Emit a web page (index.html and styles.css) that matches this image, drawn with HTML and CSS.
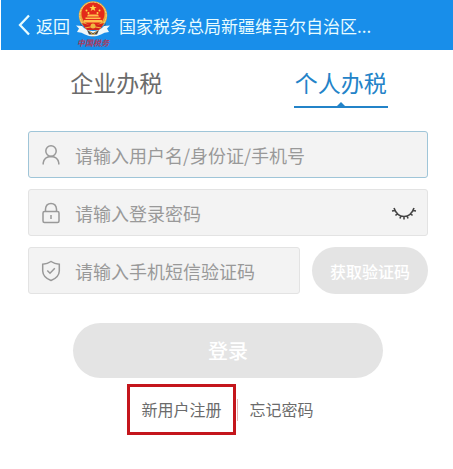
FILE: index.html
```html
<!DOCTYPE html>
<html lang="zh-CN">
<head>
<meta charset="utf-8">
<meta name="viewport" content="width=device-width, initial-scale=1">
<title>个人办税登录</title>
<link rel="stylesheet" href="styles.css">
</head>
<body>
<header class="topbar">
  <a class="back" href="#">
    <svg width="12" height="22" viewBox="0 0 12 22" aria-hidden="true"><path d="M11 1.500 2 11l9 9.500" fill="none" stroke="#e8fcff" stroke-width="2.300"/></svg>
    <span>返回</span>
  </a>
  <svg class="emblem" width="38" height="50" viewBox="0 0 38 50" aria-hidden="true">
    <path d="M6 22Q10 34 19 35 28 34 32 22L30 31 19 37 8 31Z" fill="#4a4038"/>
    <circle cx="19" cy="15.500" r="14.200" fill="#e9a83a"/>
    <circle cx="19" cy="15.500" r="13.200" fill="none" stroke="#f8da86" stroke-width="1" stroke-dasharray="2 1"/>
    <circle cx="19" cy="14" r="11.500" fill="#e32a1a"/>
    <path d="m19 4.500 1 2.500h2.600l-2.100 1.600.8 2.500-2.300-1.500-2.300 1.500.8-2.500-2.100-1.600H18Z" fill="#ffd84d"/>
    <g fill="#ffd84d"><circle cx="12.500" cy="10.500" r="1"/><circle cx="14.500" cy="13" r="1"/><circle cx="23.500" cy="13" r="1"/><circle cx="25.500" cy="10.500" r="1"/></g>
    <path d="M13 16.500 14 14.500H24L25 16.500ZM11.500 17.500H26.500V19H11.500ZM10 20H28V22.500H10Z" fill="#ffc04c"/>
    <path d="M8 23Q19 27 30 23L26 30H12Z" fill="#d3241b"/>
    <circle cx="19" cy="26" r="2.500" fill="#f0b942"/>
    <path d="M11 28Q19 25 27 28" fill="none" stroke="#f0b942"/>
    <path d="M2 25.500 8 26Q12 31 19 31T30 26L36 25.500 33 28.500 35 32Q30 32 27 34.500 19 38.500 11 34.500 8 32 3 32L5 28.500Z" fill="#eef7fa"/>
    <path d="M13 30 19 33 25 30 23 34.500H15Z" fill="#4b4a49"/>
    <path d="M15 30.500 19 35 23 30.500" fill="none" stroke="#e0ad4b"/>
    <text class="emblem-name" x="19" y="46" text-anchor="middle">中国税务</text>
  </svg>
  <h1 class="title">国家税务总局新疆维吾尔自治区...</h1>
</header>

<main>
  <nav class="tabs">
    <a class="tab" href="#">企业办税</a>
    <a class="tab tab-active" href="#" aria-current="page">个人办税</a>
  </nav>

  <form class="form">
    <label class="field field-focus">
      <svg class="icon" width="20" height="22" viewBox="0 0 20 22" aria-hidden="true"><g fill="none" stroke="#999" stroke-width="1.500"><circle cx="10" cy="7" r="5.200"/><path d="M2.200 20.500V19Q3 12.800 10 12.500 17 12.800 17.800 19V20.500"/></g></svg>
      <input type="text" placeholder="请输入用户名/身份证/手机号" aria-label="用户名/身份证/手机号">
    </label>
    <label class="field">
      <svg class="icon" width="20" height="22" viewBox="0 0 20 22" aria-hidden="true"><g fill="none" stroke="#999" stroke-width="1.500"><rect x="2" y="9.500" width="16" height="11" rx="1.500"/><path d="M4.500 9.500V7Q5 1.500 10 1.500T15.500 7V9.500M10 13v4"/></g></svg>
      <input type="password" placeholder="请输入登录密码" aria-label="登录密码">
      <button class="reveal" type="button" aria-label="显示密码">
        <svg width="26" height="14" viewBox="0 0 26 14" aria-hidden="true"><path d="M3 2Q6 10.500 13 10.500T23 2M4 4.500 1 5M6.500 7.500 4.500 9.500M10 9.500 9 12.500M13 10V13.500M16 9.500 17 12.500M19.500 7.500 21.500 9.500M22 4.500 25 5" fill="none" stroke="#444" stroke-width="1.600"/></svg>
      </button>
    </label>
    <div class="code-row">
      <label class="field">
        <svg class="icon" width="20" height="22" viewBox="0 0 20 22" aria-hidden="true"><g fill="none" stroke="#999" stroke-width="1.500"><path d="M10 1.500Q13.500 4 18.300 4.200V11Q18 17.500 10 20.500 2 17.500 1.700 11V4.200Q6.500 4 10 1.500Z"/><path d="m6.300 10.500 2.700 2.700 4.800-5"/></g></svg>
        <input type="text" placeholder="请输入手机短信验证码" aria-label="手机短信验证码">
      </label>
      <button class="pill get-code" type="button">获取验证码</button>
    </div>
    <button class="pill login" type="submit">登录</button>
  </form>

  <div class="links">
    <a class="link link-marked" href="#">新用户注册</a>
    <span class="divider"></span>
    <a class="link" href="#">忘记密码</a>
  </div>
</main>
</body>
</html>
```
FILE: styles.css
```css
* { box-sizing: border-box; }

body {
  margin: 0;
  background: #fff;
  color: #6b6b6b;
  font-family: "Noto Sans CJK SC", sans-serif;
  font-size: 16px;
}

a { color: inherit; text-decoration: none; }

button { border: 0; padding: 0; font-family: inherit; }

.topbar {
  display: flex;
  align-items: center;
  height: 50px;
  margin-left: 1px;
  padding-left: 17px;
  background: #188eea;
  color: #e8fcff;
  font-size: 17px;
}

.back { display: flex; align-items: center; gap: 6px; }

.emblem { margin: 0 7px 0 4px; flex: none; }

.emblem-name {
  fill: #a83a5c;
  font-size: 8px;
  font-style: italic;
  font-weight: 700;
}

.title {
  margin: 0;
  font-size: 17px;
  font-weight: 400;
  white-space: nowrap;
}

.tabs {
  display: flex;
  justify-content: space-around;
  padding: 15px 0 0 4px;
}

.tab {
  position: relative;
  height: 43px;
  padding: 0 1px;
  font-size: 23px;
  line-height: 34px;
}

.tab-active {
  border-bottom: 2px solid #2383c8;
  color: #2383c8;
}

.tab-active::after {
  content: "";
  position: absolute;
  bottom: 0;
  left: 50%;
  margin-left: -4px;
  border: 4px solid transparent;
  border-top: 0;
  border-bottom-color: #2383c8;
}

.form {
  display: flex;
  flex-direction: column;
  gap: 11px;
  padding: 23px 25px 0 28px;
}

.field {
  display: flex;
  align-items: center;
  flex: 1;
  height: 47px;
  min-width: 0;
  padding: 0 10px 0 12px;
  border: 1px solid #e3e3e3;
  border-radius: 3px;
  background: #f3f3f3;
}

.form > .field { flex: none; }

.field-focus { border-color: #9fc5d8; }

.icon { flex: none; }

.field input {
  flex: 1;
  min-width: 0;
  margin-left: 14px;
  padding: 0;
  border: 0;
  outline: 0;
  background: transparent;
  color: #666;
  font-family: inherit;
  font-size: 18px;
}

.field input::placeholder { color: #999; opacity: 1; }

.reveal { display: flex; background: transparent; }

.code-row { display: flex; gap: 12px; }

.pill {
  border-radius: 28px;
  background: #e4e4e4;
  color: #fff;
  font-weight: 500;
}

.get-code { width: 116px; font-size: 16px; }

.login {
  height: 55px;
  margin: 18px 45px 0;
  font-size: 20px;
}

.links {
  display: flex;
  align-items: center;
  justify-content: center;
  padding-top: 6px;
}

.link { padding: 0 12px; line-height: 45px; }

.link-marked { border: 3px solid #c4161c; padding: 0 11px; }

.divider { width: 1px; height: 22px; margin-left: 1px; background: #e8b4b4; }
```
